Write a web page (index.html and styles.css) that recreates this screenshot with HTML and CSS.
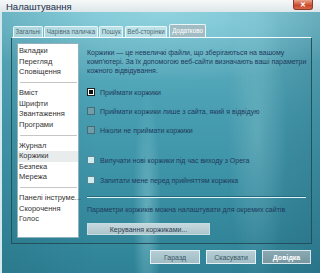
FILE: index.html
```html
<!DOCTYPE html>
<html lang="uk">
<head>
  <meta charset="UTF-8">
  <meta name="viewport" content="width=device-width, initial-scale=1.0">
  <title>Налаштування</title>
  <link rel="stylesheet" href="styles.css">
</head>
<body>

<div class="vikno">
  <!-- ЗАГОЛОВОК ВІКНА -->
  <div class="zagolovok">
    <span class="nazva">Налаштування</span>
    <span class="zakryty">✕</span>
  </div>

  <div class="tilo">
    <!-- ВКЛАДКИ -->
    <div class="vkladky">
      <div class="vkladka">Загальні</div>
      <div class="vkladka">Чарівна паличка</div>
      <div class="vkladka">Пошук</div>
      <div class="vkladka">Веб-сторінки</div>
      <div class="vkladka aktyvna">Додатково</div>
    </div>

    <div class="panel">
      <!-- СПИСОК РОЗДІЛІВ -->
      <ul class="spysok">
        <li>Вкладки</li>
        <li>Перегляд</li>
        <li>Сповіщення</li>
        <li class="rozdil"></li>
        <li>Вміст</li>
        <li>Шрифти</li>
        <li>Звантаження</li>
        <li>Програми</li>
        <li class="rozdil"></li>
        <li>Журнал</li>
        <li class="vybranyi">Коржики</li>
        <li>Безпека</li>
        <li>Мережа</li>
        <li class="rozdil"></li>
        <li>Панелі інструме...</li>
        <li>Скорочення</li>
        <li>Голос</li>
      </ul>

      <!-- ВМІСТ РОЗДІЛУ -->
      <div class="zmist">
        <p class="opys">Коржики — це невеличкі файли, що зберігаються на вашому<br>комп'ютері. За їх допомогою веб-сайти визначають ваші параметри<br>кожного відвідування.</p>

        <div class="grupa grupa-radio">
          <div class="opcija"><span class="kvadrat radio vybrano"></span>Приймати коржики</div>
          <div class="opcija"><span class="kvadrat radio"></span>Приймати коржики лише з сайта, який я відвідую</div>
          <div class="opcija"><span class="kvadrat radio"></span>Ніколи не приймати коржики</div>
        </div>

        <div class="grupa grupa-check">
          <div class="opcija"><span class="kvadrat"></span>Вилучати нові коржики під час виходу з Opera</div>
          <div class="opcija"><span class="kvadrat"></span>Запитати мене перед прийняттям коржика</div>
        </div>

        <div class="liniia"></div>
        <p class="pidkazka">Параметри коржиків можна налаштувати для окремих сайтів</p>
        <button class="knopka knopka-keruvannia">Керування коржиками...</button>
      </div>
    </div>

    <!-- КНОПКИ ВНИЗУ -->
    <div class="knopky">
      <button class="knopka">Гаразд</button>
      <button class="knopka">Скасувати</button>
      <button class="knopka dovidka">Довідка</button>
    </div>
  </div>
</div>

</body>
</html>
```

FILE: styles.css
```css
* {
  margin: 0;
  padding: 0;
  box-sizing: border-box;
}
body {
  width: 320px;
  height: 273px;
  overflow: hidden;
  font-family: "Liberation Sans", Arial, sans-serif;
}
.vikno {
  display: flex;
  flex-direction: column;
  height: 273px;
}
/* Заголовок */
.zagolovok {
  display: flex;
  align-items: flex-start;
  height: 12px;
  padding-left: 6px;
  background: linear-gradient(to bottom, #f6f8f9, #dde6e9);
}
.nazva {
  font-size: 9.5px;
  line-height: 13px;
  color: #1b2d4c;
}
.zakryty {
  margin-left: auto;
  margin-right: 7px;
  width: 20px;
  height: 10px;
  border: 1px solid #8c3b28;
  border-top: none;
  border-radius: 0 0 3px 3px;
  background: linear-gradient(to bottom, #eaa48c, #c9472c 60%, #d8684a);
  color: white;
  font-size: 7px;
  font-weight: bold;
  line-height: 9px;
  text-align: center;
}
/* Тіло вікна */
.tilo {
  flex: 1;
  display: flex;
  flex-direction: column;
  padding: 11px 8px 0 9px;
  border-left: 2px solid #d2e9ee;
  background:
    radial-gradient(ellipse 14px 120px at 145px 200px, rgba(190, 240, 245, 0.35), transparent),
    radial-gradient(ellipse 30px 160px at 255px 120px, rgba(190, 240, 245, 0.25), transparent),
    radial-gradient(ellipse 220px 70px at 160px 0, rgba(170, 225, 235, 0.6), transparent),
    linear-gradient(to right, rgba(20, 70, 90, 0.15), transparent 30%, transparent 70%, rgba(20, 60, 80, 0.2)),
    linear-gradient(to bottom, #6cbccc, #4aa2b5 40%, #3a90a4 75%, #2f8296);
}
.vkladky {
  display: flex;
  align-items: flex-end;
  gap: 1.5px;
  height: 14px;
  padding-left: 2px;
}
.vkladka {
  height: 11px;
  padding: 0 1.5px;
  border: 1px solid #e9f6f8;
  border-bottom: none;
  border-radius: 2px 2px 0 0;
  background: rgba(255, 255, 255, 0.45);
  color: #51666d;
  font-size: 6.3px;
  line-height: 10px;
}
.vkladka.aktyvna {
  height: 13px;
  padding: 0 2.5px;
  background: #a2bcc4;
  color: #ffffff;
  line-height: 12px;
}
/* Панель */
.panel {
  display: flex;
  gap: 8px;
  height: 207px;
  padding: 5px 6px 5px 5px;
  border: 1px solid #22505d;
  border-top-color: #f4fcfd;
  background: rgba(20, 80, 95, 0.05);
}
.spysok {
  width: 62px;
  padding-top: 2px;
  list-style: none;
  background: white;
  border: 1px solid #8fb3bc;
  font-size: 7.5px;
  color: #333;
}
.spysok li {
  height: 10.5px;
  line-height: 10.5px;
  padding-left: 1px;
  white-space: nowrap;
}
.spysok li.vybranyi {
  background: #e8eced;
}
.spysok li.rozdil {
  display: flex;
  align-items: center;
}
.spysok li.rozdil::after {
  content: "";
  flex: 1;
  margin: 0 1px;
  border-top: 1px solid #c6c6c6;
}
.zmist {
  flex: 1;
  display: flex;
  flex-direction: column;
  padding-top: 5px;
  font-size: 7px;
  line-height: 9px;
  color: #1e3a5c;
}
.opys {
  white-space: nowrap;
}
.grupa {
  display: flex;
  flex-direction: column;
}
.grupa-radio {
  margin-top: 12px;
  gap: 9px;
}
.grupa-check {
  margin-top: 20px;
  gap: 10px;
}
.opcija {
  display: flex;
  align-items: center;
  gap: 5px;
  height: 10px;
}
.kvadrat {
  width: 8px;
  height: 8px;
  border: 1px solid #5c8690;
  background: #cfecf1;
}
.kvadrat.radio {
  background: #6f9ea8;
  border-color: #466d76;
}
.kvadrat.radio.vybrano {
  border-color: #222;
  background: #111;
  box-shadow: inset 0 0 0 1px #fff;
}
.liniia {
  margin-top: 11px;
  height: 2px;
  border-top: 1px solid #246a7c;
  border-bottom: 1px solid #dff4f8;
}
.pidkazka {
  margin-top: 7px;
}
.knopka {
  height: 14px;
  border: 1px solid #e4f1f4;
  background: linear-gradient(to bottom, #b6ced5, #9fbcc5);
  font-family: inherit;
  font-size: 7px;
  color: #3a5663;
}
.knopka-keruvannia {
  width: 123px;
  height: 12px;
  margin-top: 9px;
  border-color: #c6dde2;
  background: linear-gradient(to bottom, #c6d8dd, #adc5cc);
  color: #2c3e50;
}
/* Кнопки внизу */
.knopky {
  display: flex;
  justify-content: flex-end;
  gap: 6px;
  margin-top: 6px;
  margin-right: 1px;
}
.knopky .knopka {
  width: 50px;
}
.knopky .knopka.dovidka {
  width: 49px;
  border-color: #d9e8ec;
  background: linear-gradient(to bottom, #8aa9b2, #7797a1);
  color: #ffffff;
  font-weight: bold;
}
```
